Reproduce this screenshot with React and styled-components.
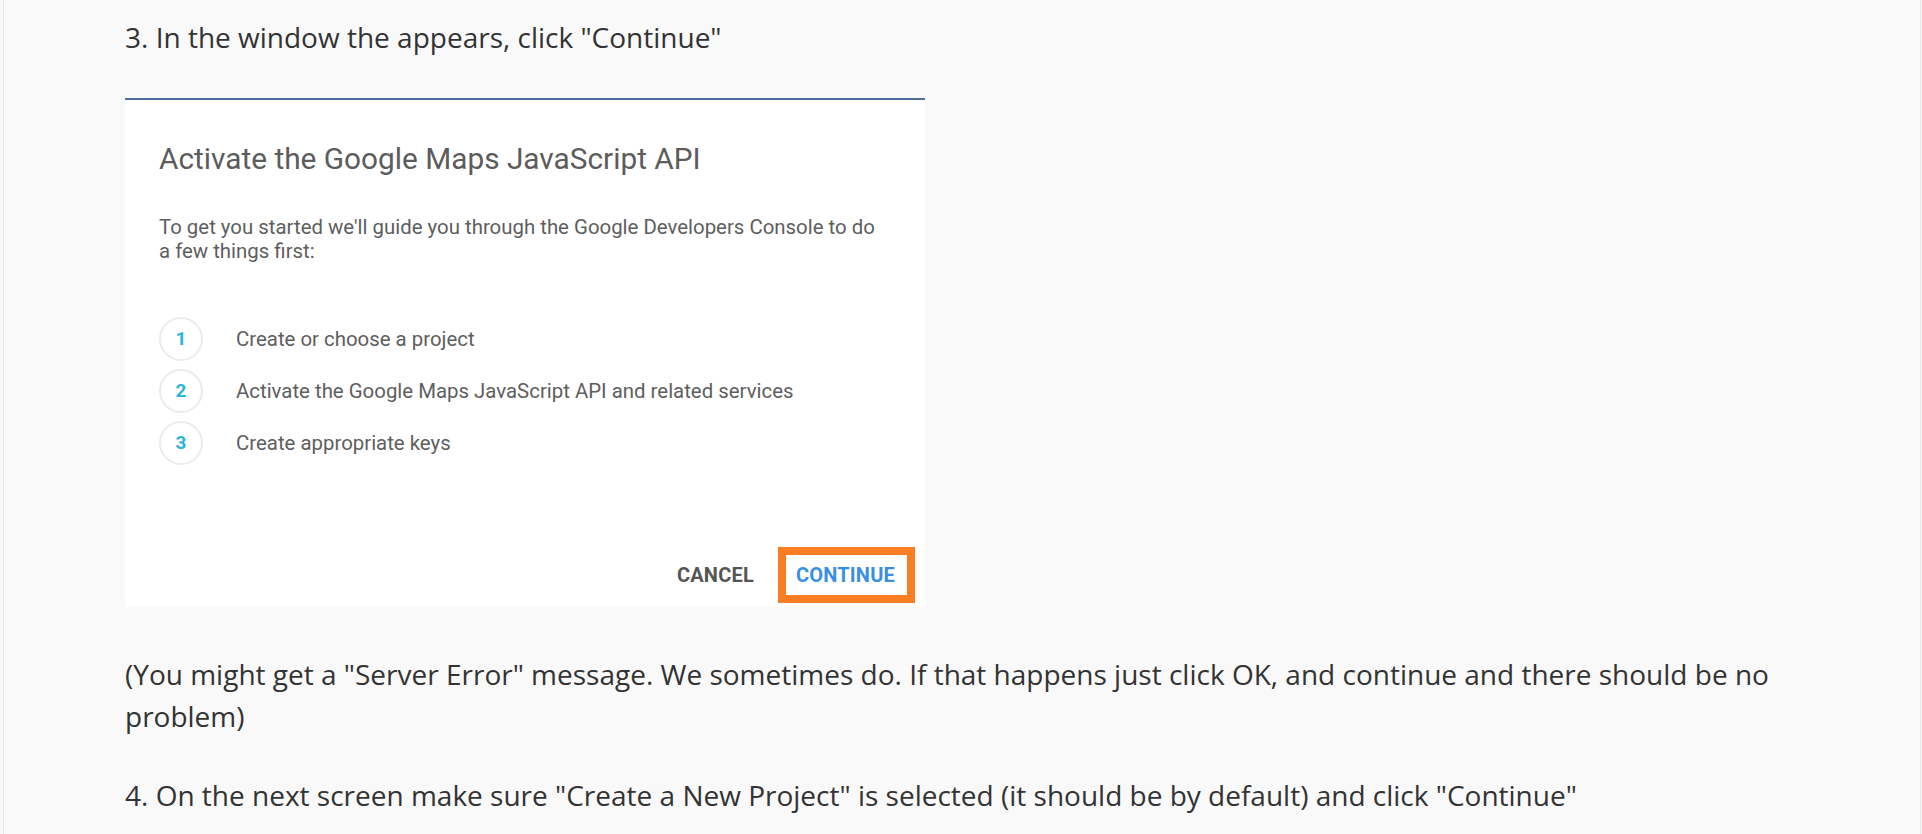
import React from "react";
import styled, { createGlobalStyle } from "styled-components";

const GlobalStyle = createGlobalStyle`
  html, body {
    margin: 0;
    padding: 0;
    background: #f9f9f9;
  }
  body {
    font-family: "Open Sans", "Liberation Sans", sans-serif;
  }
`;

const Panel = styled.main`
  box-sizing: border-box;
  margin-left: 3px;
  width: 1918px;
  min-height: 834px;
  background: #f9f9f9;
  border-left: 1px solid #e8e8e8;
  border-right: 1px solid #e8e8e8;
  padding: 16px 121px 0 121px;
  color: #333;
  font-family: "Open Sans", "Liberation Sans", sans-serif;
  font-size: 28px;
  line-height: 42px;
`;

const Para = styled.p`
  margin: ${(p) => p.$top || 0}px 0 0 0;
`;

const Figure = styled.div`
  margin-top: 40px;
  width: 800px;
  height: 509px;
`;

const Dialog = styled.section`
  box-sizing: border-box;
  width: 800px;
  height: 509px;
  background: #fff;
  border-top: 2px solid #4f6d9c;
  padding: 0 10px 4px 34px;
  display: flex;
  flex-direction: column;
  font-family: Roboto, "Liberation Sans", sans-serif;
  color: #616161;
`;

const DialogTitle = styled.h2`
  margin: 41px 0 0 0;
  font-size: 29.8px;
  line-height: 36px;
  font-weight: 400;
  color: #5c5c5c;
`;

const DialogText = styled.p`
  margin: 38px 0 0 0;
  font-size: 20.4px;
  line-height: 24px;
  color: #5e5e5e;
`;

const Steps = styled.ol`
  list-style: none;
  margin: 54px 0 0 0;
  padding: 0;
  display: flex;
  flex-direction: column;
  gap: 8px;
`;

const Step = styled.li`
  display: flex;
  align-items: center;
  gap: 33px;
  height: 44px;
  font-size: 20.4px;
  color: #5e5e5e;
`;

const StepNumber = styled.span`
  box-sizing: border-box;
  width: 44px;
  height: 44px;
  border-radius: 50%;
  border: 2px solid #ebebeb;
  display: flex;
  align-items: center;
  justify-content: center;
  color: #2ab4d9;
  font-weight: 700;
  font-size: 19px;
`;

const Actions = styled.div`
  margin-top: auto;
  display: flex;
  justify-content: flex-end;
  align-items: center;
  gap: 24px;
`;

const TextButton = styled.span`
  font-size: 20px;
  font-weight: 700;
  color: ${(p) => p.$color};
  letter-spacing: 0.2px;
`;

const Highlight = styled.span`
  box-sizing: border-box;
  height: 56px;
  border: 8px solid #fb7d22;
  padding: 0 12px 0 10px;
  display: flex;
  align-items: center;
  background: #fff;
`;

const steps = [
  "Create or choose a project",
  "Activate the Google Maps JavaScript API and related services",
  "Create appropriate keys",
];

export default function App() {
  return (
    <>
      <GlobalStyle />
      <Panel>
        <Para>3. In the window the appears, click "Continue"</Para>
        <Figure>
          <Dialog>
            <DialogTitle>Activate the Google Maps JavaScript API</DialogTitle>
            <DialogText>
              To get you started we'll guide you through the Google Developers Console to do
              <br />
              a few things first:
            </DialogText>
            <Steps>
              {steps.map((s, i) => (
                <Step key={s}>
                  <StepNumber>{i + 1}</StepNumber>
                  {s}
                </Step>
              ))}
            </Steps>
            <Actions>
              <TextButton $color="#555">CANCEL</TextButton>
              <Highlight>
                <TextButton $color="#3b8fe2">CONTINUE</TextButton>
              </Highlight>
            </Actions>
          </Dialog>
        </Figure>
        <Para $top={46}>
          (You might get a "Server Error" message. We sometimes do. If that happens just click OK, and continue and there should be no problem)
        </Para>
        <Para $top={37}>
          4. On the next screen make sure "Create a New Project" is selected (it should be by default) and click "Continue"
        </Para>
      </Panel>
    </>
  );
}
